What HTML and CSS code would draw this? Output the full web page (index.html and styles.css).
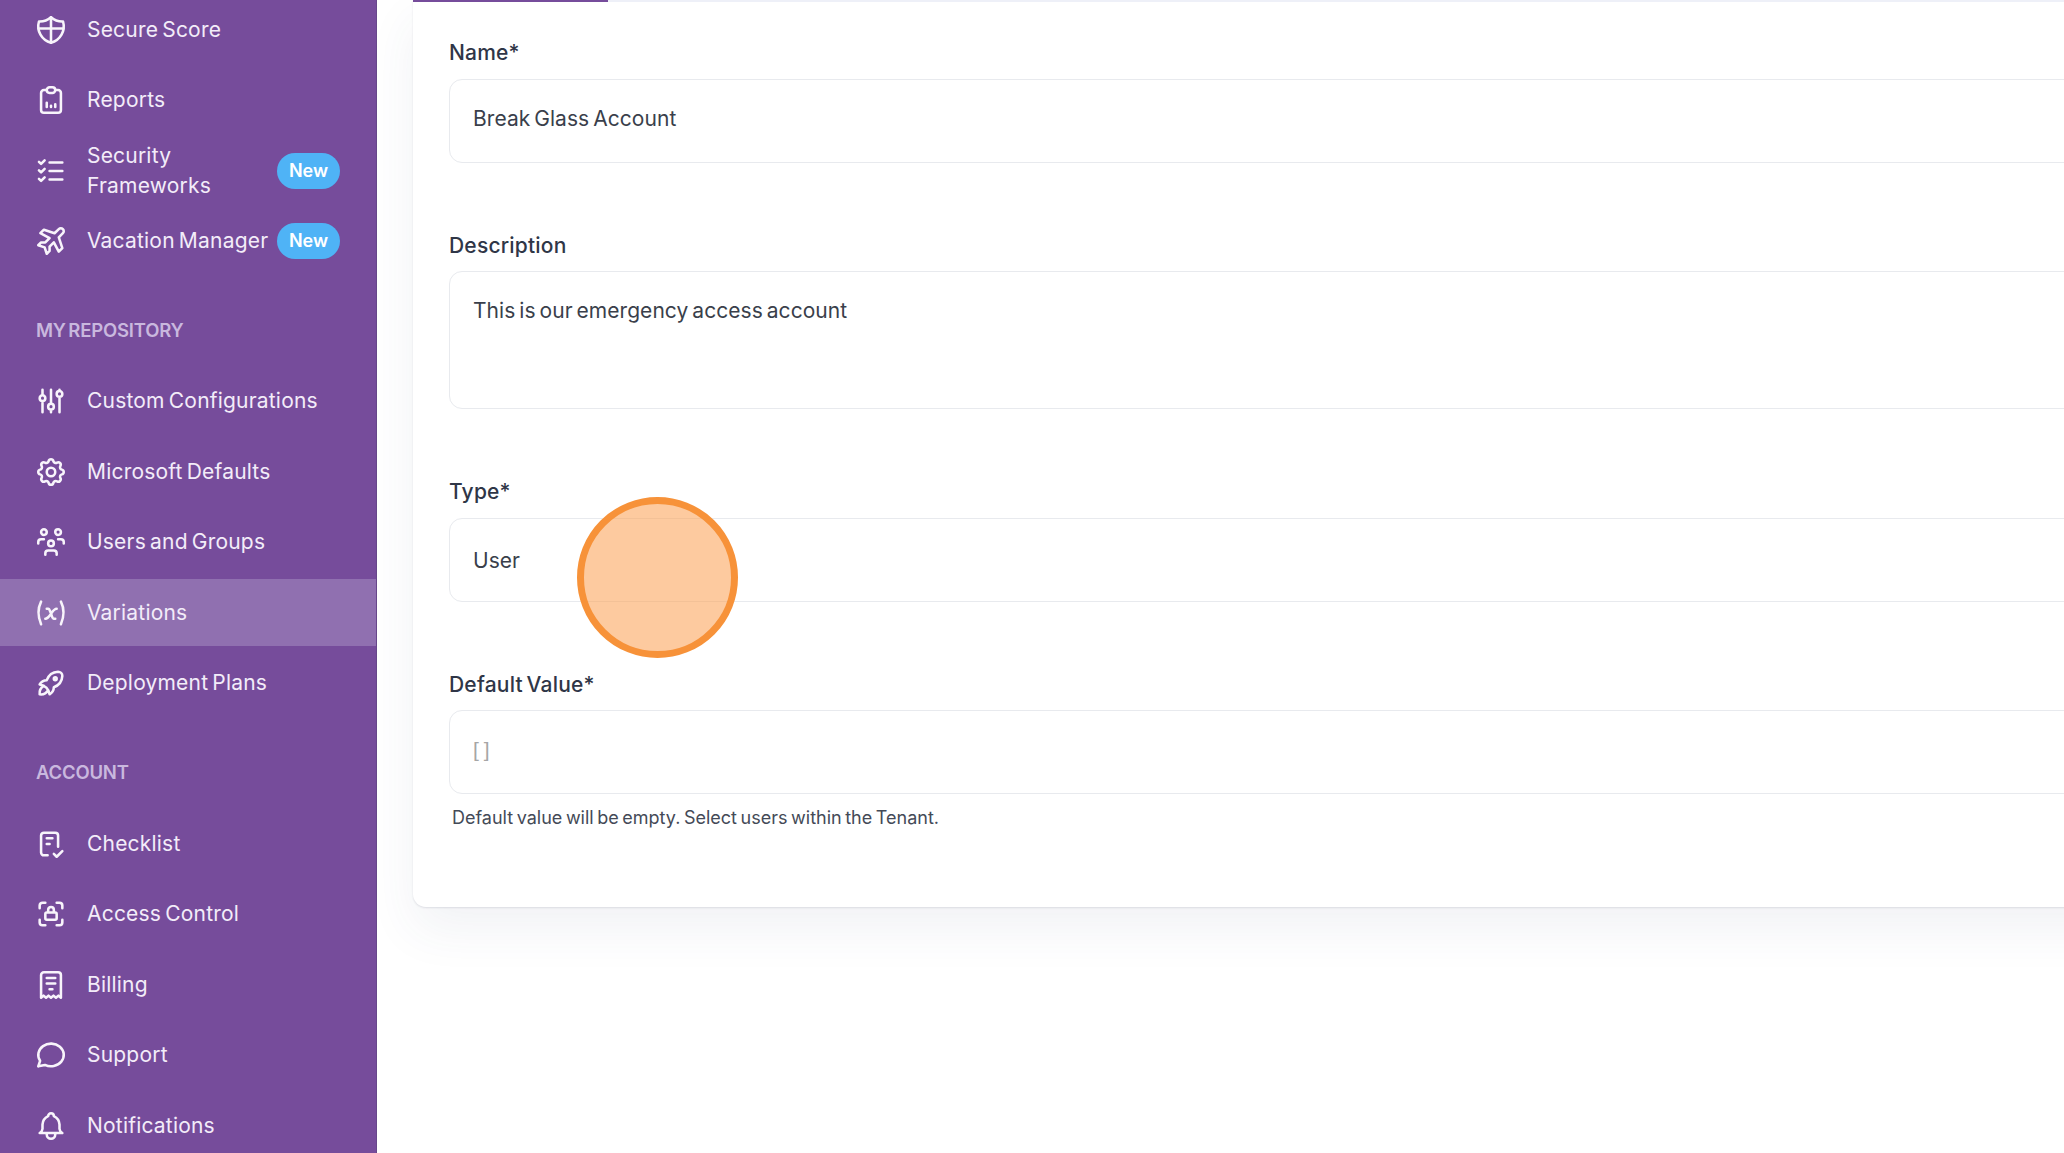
FILE: index.html
```
<!DOCTYPE html>
<html lang="en">
<head>
<meta charset="utf-8">
<title>Variations</title>
<link rel="stylesheet" href="styles.css">
</head>
<body>
<div class="app">
  <aside class="sidebar">
    <nav class="group first">
      <a class="item"><svg class="icon" viewBox="0 0 24 24"><path d="M12 3a12 12 0 0 0 8.5 3a12 12 0 0 1-8.5 15a12 12 0 0 1-8.5-15a12 12 0 0 0 8.5-3"/><path d="M12 3v18M3.8 11h16.4"/></svg><span class="text">Secure Score</span></a>
      <a class="item"><svg class="icon" viewBox="0 0 24 24"><path d="M9 5h-2a2 2 0 0 0-2 2v12a2 2 0 0 0 2 2h10a2 2 0 0 0 2-2v-12a2 2 0 0 0-2-2h-2"/><rect x="9" y="3" width="6" height="4" rx="2"/><path d="M9 17v-3M12 17v-1M15 17v-2"/></svg><span class="text">Reports</span></a>
      <a class="item"><svg class="icon" viewBox="0 0 24 24"><path d="M3.5 5.5l1.5 1.5l2.5-2.5M3.5 11.5l1.5 1.5l2.5-2.5M3.5 17.5l1.5 1.5l2.5-2.5M11 6h9M11 12h9M11 18h9"/></svg><span class="text">Security Frameworks</span><span class="badge">New</span></a>
      <a class="item"><svg class="icon" viewBox="0 0 24 24"><path d="M14.5 6.5l3-2.9a2.05 2.05 0 0 1 2.9 2.9l-2.9 3l2.5 7.5l-2.5 2.55l-3.5-6.55l-3 3v3l-2 2l-1.5-4.5l-4.5-1.5l2-2h3l3-3l-6.5-3.5l2.5-2.5z"/></svg><span class="text">Vacation Manager</span><span class="badge">New</span></a>
    </nav>
    <div class="section">MY REPOSITORY</div>
    <nav class="group mid">
      <a class="item"><svg class="icon" viewBox="0 0 24 24"><path d="M4 10a2 2 0 1 0 4 0a2 2 0 0 0-4 0M6 4v4M6 12v8M10 16a2 2 0 1 0 4 0a2 2 0 0 0-4 0M12 4v10M12 18v2M16 7a2 2 0 1 0 4 0a2 2 0 0 0-4 0M18 4v1M18 9v11"/></svg><span class="text">Custom Configurations</span></a>
      <a class="item"><svg class="icon" viewBox="0 0 24 24"><path d="M10.325 4.317c.426-1.756 2.924-1.756 3.35 0a1.724 1.724 0 0 0 2.573 1.066c1.543-.94 3.31.826 2.37 2.37a1.724 1.724 0 0 0 1.065 2.572c1.756.426 1.756 2.924 0 3.35a1.724 1.724 0 0 0-1.066 2.573c.94 1.543-.826 3.31-2.37 2.37a1.724 1.724 0 0 0-2.572 1.065c-.426 1.756-2.924 1.756-3.35 0a1.724 1.724 0 0 0-2.573-1.066c-1.543.94-3.31-.826-2.37-2.37a1.724 1.724 0 0 0-1.065-2.572c-1.756-.426-1.756-2.924 0-3.35a1.724 1.724 0 0 0 1.066-2.573c-.94-1.543.826-3.31 2.37-2.37c1 .608 2.296.07 2.572-1.065z"/><circle cx="12" cy="12" r="3"/></svg><span class="text">Microsoft Defaults</span></a>
      <a class="item"><svg class="icon" viewBox="0 0 24 24"><path d="M10 13a2 2 0 1 0 4 0a2 2 0 0 0-4 0M8 21v-1a2 2 0 0 1 2-2h4a2 2 0 0 1 2 2v1M15 5a2 2 0 1 0 4 0a2 2 0 0 0-4 0M17 10h2a2 2 0 0 1 2 2v1M5 5a2 2 0 1 0 4 0a2 2 0 0 0-4 0M3 13v-1a2 2 0 0 1 2-2h2"/></svg><span class="text">Users and Groups</span></a>
      <a class="item active"><svg class="icon" viewBox="0 0 24 24"><path d="M5 4c-2.5 5-2.5 10 0 16m14-16c2.5 5 2.5 10 0 16m-10-11h1c1 0 1 1 2.016 3.527c.984 2.473.984 3.473 1.984 3.473h1M8 16c1.5 0 3-2 4-3.5s2.5-3.5 4-3.5"/></svg><span class="text">Variations</span></a>
      <a class="item"><svg class="icon" viewBox="0 0 24 24"><path d="M4 13a8 8 0 0 1 7 7a6 6 0 0 0 3-5a9 9 0 0 0 6-8a3 3 0 0 0-3-3a9 9 0 0 0-8 6a6 6 0 0 0-5 3M7 14a6 6 0 0 0-3 6a6 6 0 0 0 6-3M14 9a1 1 0 1 0 2 0a1 1 0 1 0-2 0"/></svg><span class="text">Deployment Plans</span></a>
    </nav>
    <div class="section">ACCOUNT</div>
    <nav class="group last-group">
      <a class="item"><svg class="icon" viewBox="0 0 24 24"><path d="M9.615 20h-2.615a2 2 0 0 1-2-2v-12a2 2 0 0 1 2-2h8a2 2 0 0 1 2 2v8M14 19l2 2l4-4M9 8h4M9 12h2"/></svg><span class="text">Checklist</span></a>
      <a class="item"><svg class="icon" viewBox="0 0 24 24"><path d="M4 8v-2a2 2 0 0 1 2-2h2M4 16v2a2 2 0 0 0 2 2h2M16 4h2a2 2 0 0 1 2 2v2M16 20h2a2 2 0 0 0 2-2v-2M8 12a1 1 0 0 1 1-1h6a1 1 0 0 1 1 1v3a1 1 0 0 1-1 1h-6a1 1 0 0 1-1-1zM10 11v-2a2 2 0 1 1 4 0v2"/></svg><span class="text">Access Control</span></a>
      <a class="item"><svg class="icon" viewBox="0 0 24 24"><path d="M5 21v-16a2 2 0 0 1 2-2h10a2 2 0 0 1 2 2v16l-1.75-1.5l-1.75 1.5l-1.75-1.5l-1.75 1.5l-1.75-1.5l-1.75 1.5l-1.75-1.5l-1.75 1.5M9 7h6M9 11h6M11 15h2"/></svg><span class="text">Billing</span></a>
      <a class="item"><svg class="icon" viewBox="0 0 24 24"><path d="M3 20l1.3-3.9c-2.324-3.437-1.426-7.872 2.1-10.374c3.526-2.501 8.59-2.296 11.845.48c3.255 2.777 3.695 7.266 1.029 10.501c-2.666 3.235-7.615 4.215-11.574 2.293l-4.7 1"/></svg><span class="text">Support</span></a>
      <a class="item"><svg class="icon" viewBox="0 0 24 24"><path d="M10 5a2 2 0 1 1 4 0a7 7 0 0 1 4 6v3a4 4 0 0 0 2 3h-16a4 4 0 0 0 2-3v-3a7 7 0 0 1 4-6M9 17v1a3 3 0 0 0 6 0v-1"/></svg><span class="text">Notifications</span></a>
    </nav>
  </aside>
  <main class="main">
    <section class="card">
      <div class="tabs"><div class="tab-active"></div></div>
      <div class="form">
        <div class="field">
          <div class="label">Name*</div>
          <div class="input name-input">Break Glass Account</div>
        </div>
        <div class="field">
          <div class="label tight">Description</div>
          <div class="input textarea">This is our emergency access account</div>
        </div>
        <div class="field">
          <div class="label">Type*</div>
          <div class="input">User</div>
        </div>
        <div class="field last">
          <div class="label tight">Default Value*</div>
          <div class="input placeholder">[ ]</div>
          <div class="help">Default value will be empty. Select users within the Tenant.</div>
        </div>
      </div>
    </section>
  </main>
</div>
<div class="click-marker"></div>
</body>
</html>
```
FILE: styles.css
```
* { box-sizing: border-box; }
html, body { margin: 0; height: 100%; overflow: hidden; background: #fff; }
body { font-family: Inter, "Liberation Sans", sans-serif; }

.app { display: flex; height: 1153px; overflow: hidden; }

.sidebar {
  flex: 0 0 377px;
  background: #764c9b;
  border-right: 1px solid #67478a;
  color: #f3ecf9;
  overflow: hidden;
}
.group { display: flex; flex-direction: column; gap: 3.4px; }
.group.first { margin-top: -3.5px; }
.group.mid { gap: 3.5px; }
.group.last-group { gap: 3.6px; }

.item {
  display: flex;
  align-items: center;
  height: 67px;
  padding: 0 36px 0 34px;
  font-size: 21px;
  line-height: 30px;
  letter-spacing: 0.2px;
  word-spacing: -2px;
}
.item.active { background: #9070b0; margin-right: -1px; }
.icon {
  flex: 0 0 34px;
  width: 34px;
  height: 34px;
  margin-right: 19px;
  fill: none;
  stroke: #f8f4fb;
  stroke-width: 1.8;
  stroke-linecap: round;
  stroke-linejoin: round;
}
.text { flex: 0 1 auto; padding-right: 8px; }
.badge {
  flex: 0 0 63px;
  height: 36px;
  margin-left: auto;
  border-radius: 18px;
  background: #4fb3f6;
  color: #fff;
  font-size: 18px;
  font-weight: 600;
  line-height: 36px;
  text-align: center;
  letter-spacing: 0;
}
.section {
  height: 24px;
  margin: 44.2px 0 25px;
  padding-left: 36px;
  color: #c9b8de;
  font-size: 18.5px;
  font-weight: 600;
  line-height: 22px;
  letter-spacing: -0.2px;
  word-spacing: -2px;
}

.main { flex: 1 1 auto; min-width: 0; padding-left: 36px; }
.card {
  width: 1900px;
  background: #fff;
  border-radius: 0 0 13px 13px;
  box-shadow: 0 1px 2px rgba(30, 40, 70, 0.12), 0 22px 50px rgba(60, 75, 120, 0.07);
}
.tabs { height: 2px; background: #eef0f8; }
.tab-active { width: 195px; height: 2px; background: #764c9b; }
.form { padding: 35px 36px 75px; }
.field { margin-bottom: 67px; }
.field.last { margin-bottom: 0; }
.label {
  height: 30px;
  margin-bottom: 12px;
  color: #2f3647;
  font-size: 21px;
  font-weight: 500;
  line-height: 32px;
  letter-spacing: 0.2px;
  word-spacing: -2px;
}
.label.tight { margin-bottom: 11px; }
.input {
  display: flex;
  align-items: center;
  height: 84px;
  padding: 0 23px;
  background: #fff;
  border: 1px solid #e8eaee;
  border-radius: 13px;
  color: #3a3f4b;
  font-size: 21px;
  letter-spacing: 0.05px;
  word-spacing: -2px;
}
.name-input { padding-bottom: 5px; }
.textarea { align-items: flex-start; height: 138px; padding-top: 24px; line-height: 30px; }
.placeholder { color: #a6a6a6; font-size: 21px; font-family: "Liberation Sans", sans-serif; word-spacing: -1px; padding-bottom: 4px; }
.help {
  height: 28px;
  margin-top: 10px;
  padding-left: 3px;
  color: #444a57;
  font-size: 18px;
  line-height: 28px;
  letter-spacing: 0;
  word-spacing: -1.5px;
}

.click-marker {
  position: absolute;
  left: 577px;
  top: 497px;
  width: 161px;
  height: 161px;
  border: 7px solid #f79239;
  border-radius: 50%;
  background: rgba(251, 158, 80, 0.55);
}
```
